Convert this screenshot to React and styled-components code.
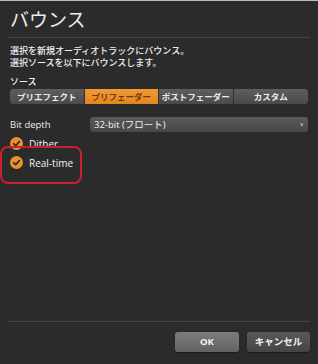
import styled, { createGlobalStyle } from 'styled-components';

const Global = createGlobalStyle`
html, body {
  margin:0;
  padding:0;
  background:#2b2b2b;
}
body {
  font-family:"Open Sans","Noto Sans CJK JP",sans-serif;
  color:#e6e6e6;
}
`

function Check() {
  return (
    <svg width="13" height="13" viewBox="0 0 13 13">
      <circle cx="6.5" cy="6.5" r="6.5" fill="#e8922e" />
      <path d="M3.6 6.6 L5.7 8.6 L9.4 4.6" fill="none" stroke="#2b2b2b" strokeWidth="1.6" strokeLinecap="round" strokeLinejoin="round" />
    </svg>
  )
}

function App() {
  const sources = ['プリエフェクト', 'プリフェーダー', 'ポストフェーダー', 'カスタム']
  return (
    <>
      <Global />
      <Dialog>
        <Title>バウンス</Title>
        <Rule />
        <Desc>
          <div>選択を新規オーディオトラックにバウンス。</div>
          <div>選択ソースを以下にバウンスします。</div>
        </Desc>
        <Label>ソース</Label>
        <Segments>
          {sources.map((s, i) => (
            <Segment key={s} active={i === 1}>{s}</Segment>
          ))}
        </Segments>
        <FieldRow>
          <FieldLabel>Bit depth</FieldLabel>
          <Select>
            <span>32-bit (フロート)</span>
            <Caret>▾</Caret>
          </Select>
        </FieldRow>
        <Checks>
          <CheckRow><Check /><span>Dither</span></CheckRow>
          <CheckRow><Check /><span>Real-time</span></CheckRow>
          <Highlight />
        </Checks>
        <Spacer />
        <Rule />
        <Footer>
          <Button primary>OK</Button>
          <Button>キャンセル</Button>
        </Footer>
      </Dialog>
    </>
  )
}

const Dialog = styled.div`
width:318px;
height:364px;
box-sizing:border-box;
border-top:1px solid #bdbdbd;
padding:6px 8px 12px;
display:flex;
flex-direction:column;
position:relative;
`
const Title = styled.div`
font-family:"Noto Sans CJK JP",sans-serif;
font-size:19px;
line-height:24px;
color:#ececec;
padding-left:2px;
margin-bottom:6px;
`
const Rule = styled.div`
height:1px;
background:#454545;
`
const Desc = styled.div`
font-family:"Noto Sans CJK JP",sans-serif;
font-size:9px;
line-height:12px;
font-weight:500;
color:#f0f0f0;
margin:7px 0 0 2px;
& > div{ height:12px; white-space:nowrap; }
`
const Label = styled.div`
font-family:"Noto Sans CJK JP",sans-serif;
font-size:9px;
line-height:12px;
height:12px;
font-weight:500;
color:#f0f0f0;
margin:7px 0 1px 2px;
`
const Segments = styled.div`
display:grid;
grid-template-columns:repeat(4,1fr);
margin:0 2px;
height:15px;
border-radius:4px;
overflow:hidden;
background:#555;
`
const Segment = styled.div`
display:flex;
align-items:center;
justify-content:center;
white-space:nowrap;
font-family:"Noto Sans CJK JP",sans-serif;
font-size:8.5px;
line-height:15px;
font-weight:700;
color:${p => p.active ? '#6a3a0c' : '#ededed'};
background:${p => p.active ? 'linear-gradient(#f09a36,#e2851f)' : 'linear-gradient(#5e5e5e,#4a4a4a)'};
border-right:1px solid #2e2e2e;
&:last-child{ border-right:none; }
`
const FieldRow = styled.div`
display:flex;
align-items:center;
margin:13px 2px 0 2px;
`
const FieldLabel = styled.div`
width:80px;
font-size:9.5px;
color:#ececec;
`
const Select = styled.div`
flex:1;
height:15px;
border-radius:3px;
background:linear-gradient(#5a5a5a,#484848);
display:flex;
align-items:center;
justify-content:space-between;
padding:0 4px 0 4px;
font-size:9.5px;
line-height:15px;
color:#f2f2f2;
font-family:"Open Sans","Noto Sans CJK JP",sans-serif;
`
const Caret = styled.span`
font-size:7px;
color:#aaa;
`
const Checks = styled.div`
position:relative;
display:flex;
flex-direction:column;
gap:6px;
margin:5px 0 0 2px;
`
const CheckRow = styled.div`
display:flex;
align-items:center;
gap:6px;
font-size:10px;
color:#f4f4f4;
height:13px;
`
const Highlight = styled.div`
position:absolute;
left:-10px;
top:9px;
width:78px;
height:34px;
border:2px solid #c8202c;
border-radius:8px;
`
const Spacer = styled.div`
flex:1;
`
const Footer = styled.div`
display:flex;
justify-content:flex-end;
gap:8px;
margin-top:10px;
`
const Button = styled.div`
width:${p => p.primary ? '64px' : '63px'};
height:20px;
border-radius:3px;
display:flex;
align-items:center;
justify-content:center;
font-family:"Open Sans","Noto Sans CJK JP",sans-serif;
font-size:9.5px;
line-height:20px;
font-weight:700;
color:#f2f2f2;
background:${p => p.primary ? 'linear-gradient(#7c7c7c,#626262)' : 'linear-gradient(#5a5a5a,#444)'};
box-shadow:0 1px 1px rgba(0,0,0,0.4);
`

export default App
